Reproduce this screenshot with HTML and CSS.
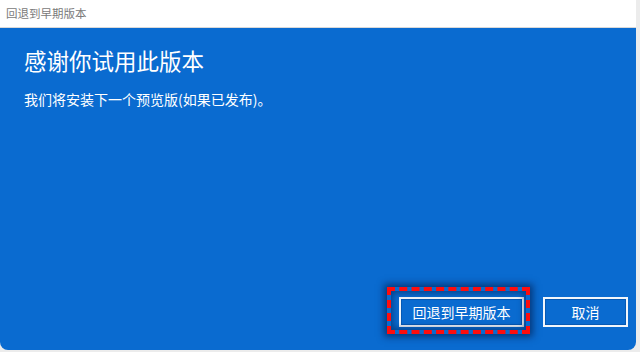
FILE: index.html
```html
<!DOCTYPE html>
<html lang="zh-CN">
<head>
<meta charset="utf-8">
<title>回退到早期版本</title>
<link rel="stylesheet" href="styles.css">
</head>
<body>
<div class="window">
  <div class="titlebar">回退到早期版本</div>
  <div class="content">
    <h1 class="heading">感谢你试用此版本</h1>
    <p class="desc">我们将安装下一个预览版(如果已发布)。</p>
    <div class="actions">
      <div class="highlight-wrap">
        <button class="btn">回退到早期版本</button>
        <span class="highlight"></span>
      </div>
      <button class="btn btn-cancel">取消</button>
    </div>
  </div>
</div>
</body>
</html>
```

FILE: styles.css
```css
html, body {
  margin: 0;
  padding: 0;
}
body {
  width: 640px;
  height: 352px;
  background: #ececec;
  font-family: "Noto Sans CJK SC", "Microsoft YaHei", sans-serif;
  overflow: hidden;
}
.window {
  width: 636px;
  height: 350px;
  display: flex;
  flex-direction: column;
  border-radius: 0 0 8px 8px;
  overflow: hidden;
  background: #0a6bd0;
}
.titlebar {
  height: 28px;
  flex: none;
  background: #ffffff;
  color: #7a7a7a;
  font-size: 11.5px;
  line-height: 26px;
  padding-left: 6px;
  border-bottom: 1px solid #d9d9d9;
  box-sizing: border-box;
}
.content {
  flex: 1;
  display: flex;
  flex-direction: column;
  padding: 0 8px 0 24px;
  color: #ffffff;
}
.heading {
  margin: 16px 0 0 0;
  font-size: 22.5px;
  font-weight: normal;
  line-height: 32px;
}
.desc {
  margin: 13px 0 0 0;
  font-size: 14px;
  line-height: 20px;
}
.actions {
  margin-top: auto;
  margin-bottom: 23px;
  display: flex;
  justify-content: flex-end;
  align-items: center;
  gap: 19px;
}
.highlight-wrap {
  position: relative;
}
.btn {
  height: 30px;
  width: 125px;
  background: #0a6bd0;
  color: #ffffff;
  border: 2px solid #f2f6fb;
  box-shadow: inset 0 0 0 1px #0659b4;
  font-family: "Noto Sans CJK SC", sans-serif;
  font-size: 14px;
  padding: 0;
  margin: 0;
  display: block;
}
.btn-cancel {
  width: 85px;
}
.highlight {
  position: absolute;
  left: -12px;
  top: -10px;
  right: -6px;
  bottom: -7px;
  border: 4px dashed #ff0d0d;
  box-shadow: 0 0 7px 3px rgba(0, 25, 70, 0.6), inset 0 0 6px 2px rgba(0, 25, 70, 0.5);
}
```
